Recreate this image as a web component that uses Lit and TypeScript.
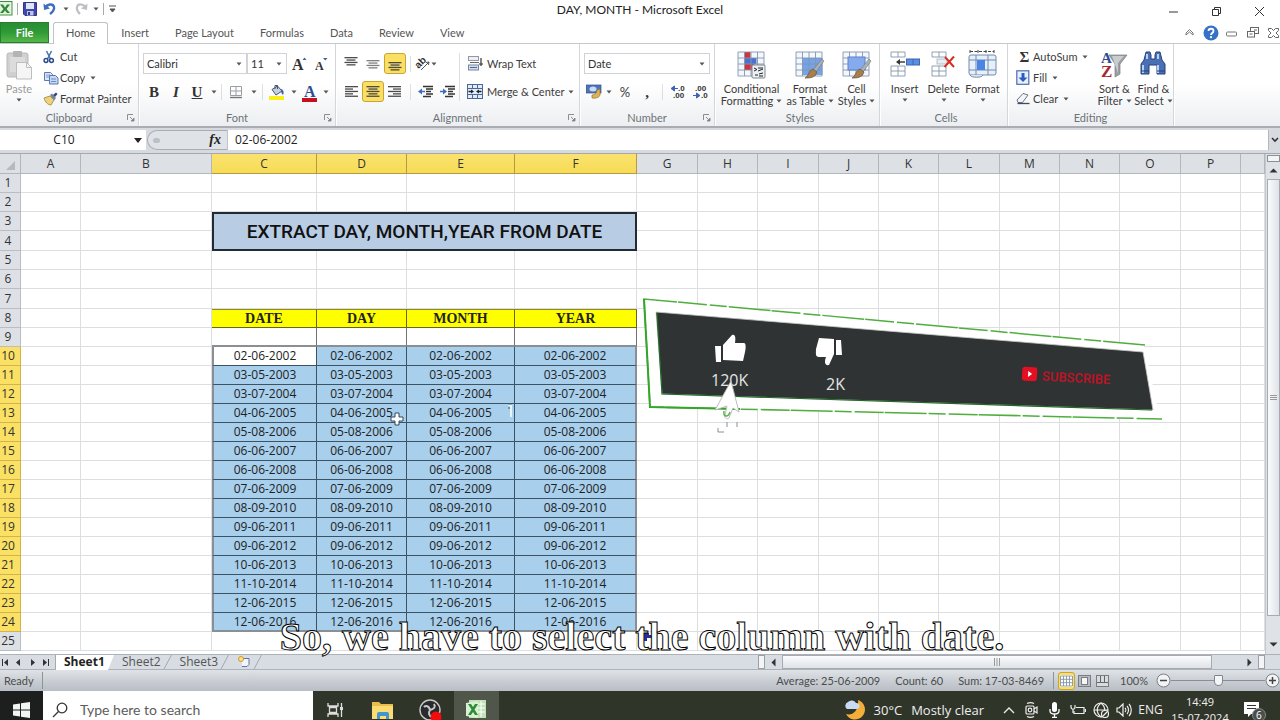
import { LitElement, html, css, svg, nothing } from "lit";
import { customElement, property } from "lit/decorators.js";
import { classMap } from "lit/directives/class-map.js";

const caret = html`<svg class="caret" width="6" height="4" viewBox="0 0 6 4"><path d="M0.5 0.5h5L3 3.5z" fill="#555" /></svg>`;
const launcher = html`<svg width="8" height="8" viewBox="0 0 8 8" fill="none" stroke="#8b8f94"><path d="M.5 6V.5H6M3 3l3 3" /><path d="M7 4v3H4z" fill="#777" /></svg>`;

const lines = (ws: number[], align: "l" | "c" | "r", off = 0) =>
  svg`${ws.map((w, i) => {
    const x = align === "l" ? 1 : align === "r" ? 13 - w : 7 - w / 2;
    return svg`<rect x=${x} y=${off + i * 2.4} width=${w} height="1.3" fill="#4b4b4b"/>`;
  })}`;

const gridLines = (w: number, h: number, c: number, r: number, x0 = 0, y0 = 0) => {
  let d = "";
  for (let i = 0; i <= c; i++) d += `M${x0 + (i * w) / c} ${y0}v${h}`;
  for (let j = 0; j <= r; j++) d += `M${x0} ${y0 + (j * h) / r}h${w}`;
  return svg`<path d=${d} fill="none" stroke="#8395ab" stroke-width=".9"/>`;
};

const brush = svg`<path d="M27 9l2 2-8 11-3-2z" fill="#aab0b5" stroke="#69737c" stroke-width=".6"/><path d="M18 19l4 3c-2 6-7 6-12 6 4-2 3-7 8-9z" fill="#a87e4b" stroke="#5d5342" stroke-width=".7"/>`;

const icons = {
  excel: html`<svg width="13" height="15" viewBox="0 0 13 15"><rect x="-3" y=".5" width="15" height="13.500" fill="#e4f3df" stroke="#3f9141"/><path d="M0 3.500h3l2 3 2-3h3L6.500 8l3.500 4H7L5 9.500 3 12H0l3.500-4z" fill="#2c8a35"/></svg>`,
  save: html`<svg width="14" height="14" viewBox="0 0 14 14"><path d="M.5.5h13v13H2L.5 12z" fill="#4348a8" stroke="#30368a"/><rect x="3" y="1" width="8" height="6" fill="#dfe6f5"/><rect x="4" y="9" width="6.500" height="4.500" fill="#b9c6ea"/><rect x="5" y="10" width="2" height="3" fill="#30368a"/></svg>`,
  undo: html`<svg width="14" height="14" viewBox="0 0 14 14" fill="none"><path d="M2 6c2-4 8-5 9-1 .7 3-1.500 5-4 7" stroke="#3f6fbd" stroke-width="2.400"/><path d="M.5 1.500L1 8l6-1.500z" fill="#3f6fbd"/></svg>`,
  redo: html`<svg width="14" height="14" viewBox="0 0 14 14" fill="none"><path d="M12 6c-2-4-8-5-9-1-.7 3 1 5 3 7" stroke="#bcbfc3" stroke-width="2.200"/><path d="M13.500 1.500L13 8 7 6.500z" fill="#bcbfc3"/></svg>`,
  paste: html`<svg width="26" height="30" viewBox="0 0 26 30"><rect x="1" y="3" width="21" height="24" rx="2" fill="#d0d0d0" stroke="#b9b9b9"/><rect x="7" y="1" width="9" height="6" rx="1" fill="#b4b4b4"/><rect x="4" y="7" width="15" height="15" fill="#dcdcdc"/><path d="M10.500 12.500h10l5 5V29h-15z" fill="#f5f5f5" stroke="#bdbdbd"/><path d="M20.500 12.500v5h5" fill="none" stroke="#bdbdbd"/></svg>`,
  cut: html`<svg width="12" height="14" viewBox="0 0 12 14" fill="none"><path d="M3.500 1l4 8M8.500 1l-4 8" stroke="#4a6fae" stroke-width="1.500"/><circle cx="3" cy="10.500" r="1.900" stroke="#2e4f8f" stroke-width="1.500"/><circle cx="8.500" cy="10.500" r="1.900" stroke="#2e4f8f" stroke-width="1.500"/></svg>`,
  copy: html`<svg width="16" height="14" viewBox="0 0 16 14" stroke="#5b79ad"><path d="M1.500 1.500h6l2 2v6h-8z" fill="#dce8fa"/><path d="M3 4h4M3 6h4" stroke="#7d99c9"/><path d="M6.500 4.500h6l2.500 2.500v6H6.500z" fill="#c4d8f7"/><path d="M8 8h5M8 10.500h5" stroke="#6f8dc4"/></svg>`,
  painter: html`<svg width="16" height="14" viewBox="0 0 16 14"><path d="M1 6l6-2 4 4-3 5c-3 0-6-3-7-7z" fill="#edd37a" stroke="#9a813b" stroke-width=".8"/><path d="M7 3l2-1.500L13 6l-2 2.500z" fill="#7783a5"/><path d="M10 3l3-2.500L14.500 2 12 5z" fill="#3a447e"/></svg>`,
  grow: html`<svg width="15" height="18" viewBox="0 -1 15 18"><text x="0" y="14" class="g16">A</text><path d="M10.500 4l2-2.500 2 2.500z" fill="#4a5f97"/></svg>`,
  shrink: html`<svg width="13" height="18" viewBox="0 -1 13 18"><text x="0" y="14" class="g12">A</text><path d="M8 2h4.500L10.300 4.500z" fill="#4a5f97"/></svg>`,
  borders: html`<svg width="14" height="14" viewBox="0 0 14 14" fill="none" stroke="#9a9ea3"><path d="M1.500 1.500h11v9h-11zM7 1.500v9M1.500 6h11"/><path d="M1 12.500h12" stroke="#777" stroke-width="1.400"/></svg>`,
  fill: html`<svg width="16" height="16" viewBox="0 0 16 16"><path d="M3 5.500L8.500 2 13 7 7 11z" fill="#c3cfe3" stroke="#46536e"/><path d="M6 5V1.500h2.500V5" fill="none" stroke="#46536e"/><path d="M12 5c3 1 3 4 2 6-1-1-2-2-2-6z" fill="#3a63b0"/><rect x="0" y="12" width="15" height="4" fill="#fbee1d"/></svg>`,
  fontColor: html`<svg width="16" height="20" viewBox="0 -4 16 20"><text x="2" y="11" class="g16 navy">A</text><rect x="0" y="12" width="15" height="4" fill="#c8101c"/></svg>`,
  aTop: html`<svg width="14" height="14" viewBox="0 0 14 14">${lines([13, 9, 13, 9], "c", 0)}</svg>`,
  aMid: html`<svg width="14" height="14" viewBox="0 0 14 14"><g opacity=".7">${lines([13, 9, 13, 9], "c", 3)}</g></svg>`,
  aBot: html`<svg width="14" height="14" viewBox="0 0 14 14">${lines([13, 9, 13, 9], "c", 5)}</svg>`,
  left: html`<svg width="14" height="13" viewBox="0 0 14 13">${lines([13, 8, 13, 8, 13], "l", 1)}</svg>`,
  center: html`<svg width="14" height="13" viewBox="0 0 14 13">${lines([13, 9, 13, 9, 13], "c", 1)}</svg>`,
  right: html`<svg width="14" height="13" viewBox="0 0 14 13">${lines([13, 8, 13, 8, 13], "r", 1)}</svg>`,
  orient: html`<svg width="16" height="18" viewBox="-1 -2 16 18"><g transform="rotate(-45 6 7)"><text x="0" y="8" class="g10">ab</text></g><path d="M5 13l8-8M13 5l-3 .5M13 5l-.5 3" stroke="#555" fill="none"/></svg>`,
  outdent: html`<svg width="15" height="13" viewBox="0 0 15 13"><path d="M5 1.500h10M8 4h7M8 6.500h5M8 9h7M5 11.500h8" stroke="#333" stroke-width="1.400"/><path d="M4 3.500v6L0 6.500z" fill="#3d6cc0"/><path d="M3 6.500h4" stroke="#3d6cc0" stroke-width="1.500"/></svg>`,
  indent: html`<svg width="15" height="13" viewBox="0 0 15 13"><path d="M5 1.500h10M8 4h7M8 6.500h5M8 9h7M5 11.500h8" stroke="#333" stroke-width="1.400"/><path d="M3 3.500v6l4-3z" fill="#3d6cc0"/><path d="M0 6.500h4" stroke="#3d6cc0" stroke-width="1.500"/></svg>`,
  wrap: html`<svg width="16" height="15" viewBox="0 0 16 15"><rect x="1.500" y=".5" width="10" height="4" fill="#eceff3" stroke="#9098a3"/><rect x="1.500" y="9" width="10" height="5" fill="#cfe0f6" stroke="#7486a3"/><path d="M3 6.500h9M3 11.500h7" stroke="#666"/><path d="M14 2v6M16 8h-4M14 10V6" stroke="#333" stroke-width="1.200"/></svg>`,
  merge: html`<svg width="16" height="15" viewBox="0 0 16 15"><rect x=".5" y=".5" width="15" height="14" fill="#e2ebf8" stroke="#4c6696"/><path d="M.5 4.500h15M.5 10.500h15M5.500.5v4M10.500.5v4M5.500 10.500v4M10.500 10.500v4" stroke="#4c6696"/><path d="M1.500 7.500h4M14.500 7.500h-4" stroke="#222" stroke-width="1.400"/><path d="M4 5.500l3 2-3 2zM12 5.500l-3 2 3 2z" fill="#222"/></svg>`,
  money: html`<svg width="16" height="15" viewBox="0 0 16 15"><rect x="0" y="1" width="15" height="8" fill="#4f75b9" stroke="#2f4e8d" stroke-width=".7"/><ellipse cx="7" cy="5" rx="3.500" ry="2.500" fill="#c8dcf8"/><path d="M14 5v6c-1 3-5 3.500-8 3v-3c3 0 5-2 5-5z" fill="#dfb554" stroke="#94722a" stroke-width=".7"/></svg>`,
  incDec: html`<svg width="16" height="15" viewBox="0 0 16 15"><path d="M0 4.500l3.500-2.500v5zM3 4.500h4" fill="#3b64b4" stroke="#3b64b4"/><text x="7" y="7" class="g8">.0</text><text x="2" y="14" class="g8">.00</text></svg>`,
  decDec: html`<svg width="16" height="15" viewBox="0 0 16 15"><text x="2" y="7" class="g8">.00</text><path d="M7 11.500L3.500 9v5zM0 11.500h4" fill="#3b64b4" stroke="#3b64b4"/><text x="8" y="14" class="g8">.0</text></svg>`,
  cond: html`<svg width="29" height="29" viewBox="0 0 29 29"><rect x="1" y="2" width="26" height="23" fill="#f4f8fe"/><rect x="7.500" y="2" width="6" height="6" fill="#d4323a"/><rect x="7.500" y="8" width="12" height="6" fill="#4a73cf"/><rect x="7.500" y="14" width="10" height="6" fill="#d4323a"/>${gridLines(26, 24, 4, 4, 1, 2)}<rect x="15" y="15" width="13" height="13" rx="1" fill="#eceff3" stroke="#7d8793"/><path d="M17 18l3 1.500-3 1.500M21 18h5M21 21l5-2M18 25h3M22 24l4-1M22 26h4" stroke="#222" fill="none"/></svg>`,
  table: html`<svg width="30" height="29" viewBox="0 0 30 29"><rect x="1" y="2" width="26" height="23" fill="#f4f8fe"/><rect x="7.500" y="8" width="20" height="17" fill="#74a3ea"/>${gridLines(26, 24, 4, 4, 1, 2)}${brush}</svg>`,
  cell: html`<svg width="30" height="29" viewBox="0 0 30 29"><rect x="1" y="2" width="26" height="23" fill="#f4f8fe"/>${gridLines(26, 24, 4, 4, 1, 2)}<rect x="6" y="7" width="17" height="13" fill="#85abee" stroke="#5d80c3"/>${brush}</svg>`,
  insert: html`<svg width="30" height="28" viewBox="0 0 30 28"><rect x="1" y="2" width="14" height="5" fill="#fff"/>${gridLines(14, 5, 2, 1, 1, 2)}${gridLines(14, 10, 2, 2, 1, 16)}<rect x="16.500" y="9" width="13" height="6" fill="#5a8de4" stroke="#3d66b0"/><path d="M23 9v6" stroke="#3d66b0"/><path d="M15 12H8" stroke="#333" stroke-width="1.400"/><path d="M10 9l-4 3 4 3z" fill="#333"/></svg>`,
  del: html`<svg width="26" height="28" viewBox="0 0 26 28">${gridLines(14, 5, 2, 1, 1, 2)}${gridLines(14, 10, 2, 2, 1, 16)}<rect x="6" y="9" width="10" height="5" fill="#e9eef6" stroke="#9aa7b8" stroke-width=".7"/><path d="M14 7l9 10M23 6.500L13.500 17" stroke="#d63025" stroke-width="2"/></svg>`,
  format: html`<svg width="30" height="29" viewBox="0 0 30 29"><path d="M2 1.500h24M2 0v3M10 0v3M18 0v3M26 0v3" stroke="#444" stroke-dasharray="3 1.500"/><rect x="1" y="5" width="27" height="20" rx="2" fill="#e5f0fc" stroke="#748ba8"/><path d="M8 5v20M20 5v20M1 10h27M1 20h27" stroke="#748ba8"/><rect x="9" y="10" width="8" height="10" fill="#4c84e3"/><path d="M2 25c1 3 12 3 13 0" fill="#dde5ee" stroke="#748ba8"/></svg>`,
  down: html`<svg width="14" height="15" viewBox="0 0 14 15"><rect x=".8" y=".8" width="12" height="13.500" fill="#e8f0fb" stroke="#4a6db3" stroke-width="1.200"/><path d="M7 3v6" stroke="#2d5cc0" stroke-width="3"/><path d="M2.500 7.500h9L7 12z" fill="#2d5cc0"/></svg>`,
  eraser: html`<svg width="14" height="13" viewBox="0 0 14 13"><path d="M1 8l6-6.500 5 1.500-5.500 7.500L2 10.500z" fill="#f3f5f8" stroke="#6b7486"/><path d="M1.500 11.500h12" stroke="#404a5c" stroke-width="1.300"/></svg>`,
  sort: html`<svg width="28" height="31" viewBox="0 0 28 31"><path d="M9 5h18l-7 9v10l-5 3V14z" fill="#9c9fa3" stroke="#7b7e83" stroke-width=".7"/><path d="M12 6h12l-6 7v10z" fill="#c9cbce"/><text x="1" y="13" class="g15 navy">A</text><text x="1" y="27" class="g17 red">Z</text></svg>`,
  find: html`<svg width="28" height="27" viewBox="0 0 28 27"><path d="M7 2h4l1 3v4h4V5l1-3h4l2 8 3 4v10h-8v-9h-8v9H2V14l3-4z" fill="#4a6fb5" stroke="#25407a"/><path d="M4 15v8M19 15v8M8 4v5M19 4v5" stroke="#b9d0f5" stroke-width="2"/><path d="M2 21h8M18 21h8" stroke="#25407a"/></svg>`,
};

const dates = [
  "02-06-2002", "03-05-2003", "03-07-2004", "04-06-2005", "05-08-2006",
  "06-06-2007", "06-06-2008", "07-06-2009", "08-09-2010", "09-06-2011",
  "09-06-2012", "10-06-2013", "11-10-2014", "12-06-2015", "12-06-2016",
];
const heads = ["DATE", "DAY", "MONTH", "YEAR"];
const columns = [..."ABCDEFGHIJKLMNOP", ""];
const colWidths = [21, 60, 131, 105, 90, 108, 122, 61, 60, 61, 60, 60, 61, 60, 60, 61, 60];
const tallRows = new Set([4, 7]);

@customElement("ribbon-group")
class RibbonGroup extends LitElement {
  @property() label = "";
  @property({ type: Boolean }) dialog = false;
  static styles = css`
    :host { display: flex; flex-direction: column; box-sizing: border-box; border-right: 1px solid #d3d6da; box-shadow: 1px 0 #fff; }
    .body { flex: 1; display: flex; min-height: 0; }
    .foot { display: grid; grid-template-columns: 14px 1fr 14px; align-items: center; height: 17px; color: #6d7278; text-align: center; }
    button { border: 0; background: none; padding: 0; height: 10px; line-height: 0; }
    .name { grid-column: 2; }
  `;
  render() {
    return html`<div class="body"><slot></slot></div>
      <div class="foot"><span class="name">${this.label}</span>${this.dialog ? html`<button aria-label="${this.label} options">${launcher}</button>` : nothing}</div>`;
  }
}

@customElement("app-root")
class AppRoot extends LitElement {
  static styles = css`
    :host { display: flex; flex-direction: column; height: 100vh; overflow: hidden; position: relative; font: 11px/14px Lato, "Open Sans", sans-serif; color: #3c3c3c; background: #fff; }
    * { box-sizing: border-box; }
    button, select, input { font: inherit; color: inherit; border: 0; background: none; padding: 0; margin: 0; border-radius: 0; outline: 0; }
    select { appearance: none; }
    a { color: inherit; text-decoration: none; }
    svg { display: block; flex: none; }
    .g8 { font: bold 8px "Liberation Sans", sans-serif; fill: #333; }
    .g10 { font: bold 10px "Liberation Sans", sans-serif; fill: #333; }
    .g12 { font: bold 12px "Liberation Serif", serif; fill: #333; }
    .g15 { font: bold 15px "Liberation Serif", serif; }
    .g16 { font: bold 16px "Liberation Serif", serif; fill: #333; }
    .g17 { font: bold 17px "Liberation Serif", serif; }
    .navy { fill: #2f4c8f; }
    .red { fill: #a52b35; }

    .title { display: grid; grid-template-columns: 1fr auto 1fr; height: 22px; align-items: start; }
    .quick { display: flex; align-items: center; height: 17px; }
    .quick button { height: 16px; display: grid; place-items: center; }
    .w6 { width: 6px; } .w8 { width: 8px; } .w14 { width: 14px; } .w16 { width: 16px; } .w20 { width: 20px; } .w22 { width: 22px; } .w24 { width: 24px; } .w26 { width: 26px; } .w28 { width: 28px; } .w30 { width: 30px; }
    .ml4 { margin-left: 4px; }
    .bar { width: 1px; height: 12px; background: #a7a9ab; margin: 0 5px 0 4px; }
    .caption { font-size: 12px; line-height: 20px; color: #222; }
    .win { display: flex; justify-content: flex-end; gap: 22px; padding-right: 10px; height: 22px; }
    .win button { width: 21px; display: grid; place-items: center; }

    .tabs { display: flex; height: 22px; border-bottom: 1px solid #c4c8cc; flex: none; }
    .tabs a { padding: 0 13px; line-height: 22px; height: 22px; color: #555; }
    .tabs .file { width: 49px; padding: 0; text-align: center; color: #fff; font-weight: 700; margin-right: 4px; background: linear-gradient(#2a8c34, #2f9a37 50%, #55b745); border: 1px solid #258030; height: 21px; line-height: 19px; }
    .tabs .on { background: #fff; border: 1px solid #bfc3c8; border-bottom: 0; border-radius: 3px 3px 0 0; padding: 0 12px; line-height: 20px; }
    .help { margin-left: auto; margin-right: -4px; display: flex; align-items: center; }
    .help button { width: 21px; height: 20px; display: grid; place-items: center; }

    .ribbon { display: flex; height: 84px; flex: none; background: linear-gradient(#fff 50%, #eceef1); border-bottom: 2px solid #a9adb2; }
    .clip { width: 139px; } .font { width: 197px; } .align { width: 244px; } .num { width: 135px; } .styles { width: 165px; padding-left: 6px; } .cells { width: 128px; padding-left: 5px; } .edit { width: 166px; }
    .big { display: flex; flex-direction: column; align-items: center; padding-top: 6px; line-height: 12px; }
    .big .ic { height: 33px; }
    .big .two { display: flex; align-items: center; gap: 3px; }
    .big .caret { margin-top: 3px; }
    .big .two .caret { margin-top: 0; }
    .clip .big { width: 38px; }
    .styles .big:nth-child(1) { width: 61px; } .styles .big:nth-child(2) { width: 56px; } .styles .big:nth-child(3) { width: 37px; }
    .cells .big { width: 39px; }
    .edit .big { width: 40px; }
    .muted { color: #9b9b9b; }
    .list { display: flex; flex-direction: column; padding-top: 2px; margin-left: 5px; }
    .edit .list { width: 81px; margin-left: 8px; }
    .list button { display: grid; grid-template-columns: 17px auto auto; align-items: center; justify-content: start; height: 21px; }
    .list .caret { margin-left: 5px; }
    .rows { display: flex; flex-direction: column; padding-top: 9px; gap: 7px; padding-left: 4px; }
    .row { display: flex; align-items: center; height: 21px; }
    .row button { display: flex; align-items: center; justify-content: center; height: 21px; }
    .combo { display: grid; align-items: center; border: 1px solid #d0d3d7; height: 21px; background: #fff; }
    .combo > * { grid-area: 1 / 1; }
    .combo select { width: 100%; padding-left: 3px; height: 19px; color: #333; }
    .combo .caret { justify-self: end; margin-right: 4px; }
    .w104 { width: 104px; } .w40 { width: 40px; } .w126 { width: 126px; }
    .vr { width: 1px; height: 16px; background: #dcdee1; }
    .tall { height: 48px; margin: 9px 3px 0 4px; }
    .gapped { margin: 0 8px 0 4px; }
    .active { background: #fbdf63; border: 1px solid #c9a437; border-radius: 3px; }
    .serif { font: 700 15px/20px "Liberation Serif", serif; color: #333; }
    .it { font-style: italic; } .un { text-decoration: underline; }
    .pct { font-size: 13px; }
    .wide { gap: 4px; }

    .formula { display: flex; height: 26px; flex: none; background: #d7dbe0; padding: 2px 0 3px; border-bottom: 1px solid #a5a9ae; font: 12px/16px "Open Sans", sans-serif; color: #222; }
    .namebox { width: 146px; display: flex; align-items: center; background: #fff; padding-right: 4px; }
    .namebox input { flex: 1; min-width: 0; text-align: center; padding-right: 6px; }
    .fx { width: 81px; display: flex; align-items: center; justify-content: flex-end; padding-right: 6px; border: 1px solid #a9aeb5; border-right-color: #c0c4c8; border-radius: 10px 0 0 10px; background: #dfe3e8; font: italic 700 14px/18px "Liberation Serif", serif; margin-left: 1px; }
    .fx i { width: 7px; height: 5px; border-radius: 3px; background: #bcc0c5; margin-right: auto; margin-left: 5px; }
    .formula .entry { flex: 1; background: #fff; padding-left: 7px; }
    .expand { width: 12px; display: grid; place-items: center; background: #d7dbe0; border-left: 1px solid #b3b7bc; }

    .sheet { flex: 1; min-height: 0; display: flex; position: relative; overflow: hidden; }
    .cellsbox { flex: 1; min-width: 0; overflow: hidden; }
    table { border-collapse: separate; border-spacing: 0; table-layout: fixed; width: 100%; font: 12px/14px "Open Sans", sans-serif; color: #222; }
    th, td { padding: 0; height: 19px; border-right: 1px solid #dcdee1; border-bottom: 1px solid #dcdee1; text-align: center; font-weight: 400; white-space: nowrap; overflow: hidden; }
    thead th { background: #dde1e6; border-color: #b2b7bd; height: 20px; color: #333; }
    tbody th { background: #dde1e6; border-color: #b9bec4; padding-right: 4px; color: #333; }
    .tr20 td, .tr20 th { height: 20px; }
    thead .hot { background: linear-gradient(#fbe26f, #f6dc55); border-color: #b39a43; }
    tbody .hot { background: #fbe163; border-color: #d2b34d; }
    td.banner { background: #b8cce4; border: 2px solid #222a33; font: 500 19px/24px Roboto, sans-serif; color: #111; }
    td.head { background: #ff0; border: 1px solid #66661a; border-left: 0; border-top-color: #8b8b20; font: 700 14px/16px "Liberation Serif", serif; }
    td.sub { border-right-color: #6f7378; border-bottom: 2px solid #8b8f94; }
    td.sel { background: #a8cfec; border-color: #3d5263; }
    td.first { background: #fff; }
    td.le { border-left: 2px solid #8a8f95; }
    td.re { border-right: 2px solid #8a8f95; }
    td.be { border-bottom: 2px solid #8a8f95; }

    .vscroll { width: 15px; display: flex; flex-direction: column; align-items: center; background: #dfe2e6; border-left: 1px solid #c5c9cd; padding-bottom: 1px; }
    .vsplit { width: 13px; height: 7px; border: 1px solid #8c9095; background: #f3f4f5; margin-top: 1px; }
    .vscroll button { height: 17px; width: 13px; display: grid; place-items: center; }
    .vthumb { flex: 1; width: 13px; border: 1px solid #a7abb0; background: linear-gradient(90deg, #fafbfc, #dfe3e8); display: grid; place-items: center; margin-bottom: 20px; }

    .over { position: absolute; pointer-events: none; }
    .promo { left: 640px; top: 139px; }
    .count { font: 500 16px "Open Sans", sans-serif; fill: #e2e4e4; }
    .subs { font: 500 13px Roboto, sans-serif; fill: #c01226; }
    .cross { left: 389px; top: 257px; }
    .tag { left: 640px; top: 476px; }
    .mark { left: 507px; top: 249px; }
    .cc { left: 4px; right: 0; bottom: 61px; text-align: center; font: 700 40px/44px "Liberation Serif", serif; color: #fff; -webkit-text-stroke: 1px #000; }

    .tabbar { display: flex; height: 16px; flex: none; background: #d7dde3; border-top: 1px solid #adb2b8; border-bottom: 1px solid #adb2b8; font: 12px/14px "Open Sans", sans-serif; color: #555; align-items: stretch; }
    .nav { display: flex; width: 56px; align-items: center; justify-content: space-between; padding: 0 5px 0 1px; border-right: 1px solid #a5a9ae; }
    .nav button { width: 9px; height: 13px; display: grid; place-items: center; }
    .tabbar a { padding: 0 2px 0 8px; height: 15px; }
    .tabbar a.cur { background: #fff; font-weight: 700; color: #222; clip-path: polygon(0 0, 100% 0, calc(100% - 6px) 100%, 0 100%); width: 58px; }
    .hs { margin-left: auto; display: flex; width: 522px; align-items: center; }
    .split { width: 7px; height: 14px; border: 1px solid #9ca0a5; background: #f3f4f5; }
    .hs button { width: 17px; display: grid; place-items: center; height: 14px; }
    .hthumb { flex: 1; height: 14px; border: 1px solid #a7abb0; background: linear-gradient(#fafbfc, #dfe3e8); display: grid; place-items: center; }
    .hs .rbtn { margin-left: 29px; }
    .pad15 { margin-right: 15px; }

    .status { display: flex; height: 21px; flex: none; align-items: center; background: linear-gradient(#dfe3e7, #c6cbd1 60%, #b8bec4); color: #4c4c4c; padding-left: 4px; }
    .status .vr { background: #8f9499; height: 17px; }
    .ready { width: 38px; }
    .nums { margin-left: auto; display: flex; gap: 15px; padding-right: 9px; }
    .views { display: flex; align-items: center; gap: 1px; margin: 0 9px 0 4px; }
    .views button { width: 17px; height: 18px; display: grid; place-items: center; }
    .zoom { display: flex; align-items: center; margin-left: 8px; }
    .zoom input { appearance: none; width: 94px; height: 16px; background: linear-gradient(#8a8f95, #8a8f95) center / 100% 1px no-repeat; }
    .zoom input::-webkit-slider-thumb { appearance: none; width: 9px; height: 11px; border: 1px solid #7f858b; background: #f4f5f6; border-radius: 1px 1px 4px 4px; }

    .task { height: 29px; flex: none; background: #30352a; overflow: hidden; color: #eee; font: 12px/16px "Open Sans", sans-serif; }
    .inner { display: flex; height: 37px; align-items: center; }
    .inner button { display: grid; place-items: center; height: 37px; }
    .start { width: 43px; background: #1c1f1d; }
    .search { width: 270px; height: 37px; background: #fff; color: #555; display: flex; align-items: center; gap: 12px; padding-left: 9px; font: 14px/18px Lato, sans-serif; margin-right: -1px; }
    .search input { flex: 1; min-width: 0; }
    .search input::placeholder { color: #5c5c5c; opacity: 1; }
    .app { width: 48px; }
    .app.view { width: 46px; }
    .app.live { background: #50564a; width: 45px; }
    .right { margin-left: auto; display: flex; align-items: center; height: 37px; }
    .weather { display: flex; align-items: center; gap: 8px; margin-right: 13px; }
    .wx { font-size: 13px; display: flex; gap: 9px; }
    .tray { width: 23px; height: 37px; }
    .lang { width: 31px; text-align: center; }
    .clock { width: 60px; text-align: center; font-size: 11px; margin-left: 4px; white-space: nowrap; }
    .note { width: 50px; }
    .six { font: 10px "Open Sans", sans-serif; fill: #fff; }
  `;

  big(icon: unknown, a: string, b?: string) {
    return html`<button class="big"><span class="ic">${icon}</span><span>${a}</span>${b ? html`<span class="two">${b}${caret}</span>` : caret}</button>`;
  }

  ribbon() {
    return html`<section class="ribbon" aria-label="Home">
      <ribbon-group class="clip" label="Clipboard" dialog>
        <button class="big muted"><span class="ic">${icons.paste}</span><span>Paste</span>${caret}</button>
        <div class="list">
          <button>${icons.cut}<span>Cut</span></button>
          <button>${icons.copy}<span>Copy</span>${caret}</button>
          <button>${icons.painter}<span>Format Painter</span></button>
        </div>
      </ribbon-group>
      <ribbon-group class="font" label="Font" dialog>
        <div class="rows">
          <div class="row">
            <label class="combo w104"><select aria-label="Font"><option>Calibri</option></select>${caret}</label>
            <label class="combo w40"><select aria-label="Font size"><option>11</option></select>${caret}</label>
            <button aria-label="Grow font" class="w24">${icons.grow}</button>
            <button aria-label="Shrink font" class="w20">${icons.shrink}</button>
          </div>
          <div class="row">
            <button class="serif w22">B</button><button class="serif it w22">I</button><button class="serif un w20">U</button>
            <button class="w14" aria-label="Underline style">${caret}</button><span class="vr"></span>
            <button class="w28" aria-label="Borders">${icons.borders}</button><button class="w8" aria-label="Border style">${caret}</button><span class="vr ml4"></span>
            <button class="w28" aria-label="Fill colour">${icons.fill}</button><button class="w6" aria-label="Pick fill">${caret}</button>
            <button class="w26" aria-label="Font colour">${icons.fontColor}</button><button class="w6" aria-label="Pick colour">${caret}</button>
          </div>
        </div>
      </ribbon-group>
      <ribbon-group class="align" label="Alignment" dialog>
        <div class="rows">
          <div class="row"><button class="w22" aria-label="Top">${icons.aTop}</button><button class="w22" aria-label="Middle">${icons.aMid}</button><button class="w22 active" aria-label="Bottom">${icons.aBot}</button></div>
          <div class="row"><button class="w22" aria-label="Left">${icons.left}</button><button class="w22 active" aria-label="Centre">${icons.center}</button><button class="w22" aria-label="Right">${icons.right}</button></div>
        </div>
        <div class="rows">
          <div class="row"><span class="vr"></span><button class="w30" aria-label="Orientation">${icons.orient}${caret}</button></div>
          <div class="row"><span class="vr"></span><button class="w28" aria-label="Outdent">${icons.outdent}</button><button class="w16" aria-label="Indent">${icons.indent}</button></div>
        </div>
        <span class="vr tall"></span>
        <div class="rows">
          <div class="row"><button class="wide">${icons.wrap}Wrap Text</button></div>
          <div class="row"><button class="wide">${icons.merge}Merge &amp; Center ${caret}</button></div>
        </div>
      </ribbon-group>
      <ribbon-group class="num" label="Number" dialog>
        <div class="rows">
          <div class="row"><label class="combo w126"><select aria-label="Number format"><option>Date</option></select>${caret}</label></div>
          <div class="row">
            <button class="w30 wide" aria-label="Currency">${icons.money}${caret}</button>
            <button class="w22 pct">%</button><button class="serif w22">,</button><span class="vr gapped"></span>
            <button class="w16" aria-label="Increase decimal">${icons.incDec}</button><button class="w28" aria-label="Decrease decimal">${icons.decDec}</button>
          </div>
        </div>
      </ribbon-group>
      <ribbon-group class="styles" label="Styles">
        ${this.big(icons.cond, "Conditional", "Formatting")}${this.big(icons.table, "Format", "as Table")}${this.big(icons.cell, "Cell", "Styles")}
      </ribbon-group>
      <ribbon-group class="cells" label="Cells">
        ${this.big(icons.insert, "Insert")}${this.big(icons.del, "Delete")}${this.big(icons.format, "Format")}
      </ribbon-group>
      <ribbon-group class="edit" label="Editing">
        <div class="list">
          <button><span class="serif">Σ</span><span>AutoSum</span>${caret}</button>
          <button>${icons.down}<span>Fill</span>${caret}</button>
          <button>${icons.eraser}<span>Clear</span>${caret}</button>
        </div>
        ${this.big(icons.sort, "Sort &", "Filter")}${this.big(icons.find, "Find &", "Select")}
      </ribbon-group>
    </section>`;
  }

  row(n: number) {
    const hot = n >= 10 && n <= 24;
    const cells: unknown[] = [];
    for (let c = 0; c < 17; c++) {
      const k = c - 2;
      const inside = k >= 0 && k < 4;
      if (inside && n === 3) {
        if (k === 0) cells.push(html`<td class="banner" colspan="4" rowspan="2">EXTRACT DAY, MONTH,YEAR FROM DATE</td>`);
      } else if (inside && n === 4) {
        continue;
      } else if (inside && n === 8) cells.push(html`<td class="head">${heads[k]}</td>`);
      else if (inside && n === 9) cells.push(html`<td class="sub"></td>`);
      else if (inside && hot)
        cells.push(html`<td class=${classMap({ sel: true, first: n === 10 && k === 0, le: k === 0, re: k === 3, be: n === 24 })}>${dates[n - 10]}</td>`);
      else cells.push(html`<td></td>`);
    }
    return html`<tr class=${classMap({ tr20: tallRows.has(n) })}><th scope="row" class=${classMap({ hot })}>${n}</th>${cells}</tr>`;
  }

  promo() {
    return html`<svg class="over promo" width="524" height="155" viewBox="0 0 524 155">
      <path d="M4 6L504 52l16 74L10 114z" fill="#fff"/>
      <path d="M505 52L4 6l6 108 512 12" fill="none" stroke="#4fae3e" stroke-width="1.500" stroke-dasharray="42 2 17 3 29 1"/>
      <path d="M4 6L10 114l90 2" fill="none" stroke="#36a52c" stroke-width="2"/>
      <path d="M16 19L503 59l10 58L22 101z" fill="#303334" stroke="#c4c8c4" stroke-width=".8"/>
      <path d="M17 20l5 81 490 16" fill="none" stroke="#1f6a24" stroke-width="1.200"/>
      <g fill="#fff"><path d="M75 53h6v16h-5zM83 67V52l9-10c3-1 4 2 3 8h9c2 0 2 5 1 9l-2 9z"/>
      <path d="M201 47h-5v15h6zM194 46v15l-5 11c-4 1-5-3-3-8h-7c-4 0-3-4-3-8l3-11z"/></g>
      <text x="71" y="93" class="count">120K</text><text x="186" y="97" class="count">2K</text>
      <g transform="rotate(3 390 83)"><rect x="382" y="74" width="15" height="14" rx="3" fill="#e30f22"/><path d="M388 78l4 3-4 3z" fill="#fff"/><text x="402" y="87" class="subs">SUBSCRIBE</text></g>
      <path d="M91 88l8 31-6-4-4 10c-2 2-5 0-4-3l2-9-12 4z" fill="#fff" stroke="#b5b5b5" stroke-width=".9"/>
      <path d="M84 118c-1 6 4 7 6 1" fill="none" stroke="#57b848" stroke-width="1.500"/>
      <path d="M87 134v-5M97 134v-5M78 135v4h6" fill="none" stroke="#8e8e8e"/>
    </svg>`;
  }

  slash() {
    return html`<svg width="9" height="14" viewBox="0 0 9 14"><path d="M8.500 0L1 14" stroke="#a5a9ae" fill="none"/></svg>`;
  }

  render() {
    const tri = (d: string) => html`<svg width="9" height="9" viewBox="0 0 9 9"><path d=${d} fill="#333" /></svg>`;
    return html`
      <header class="title">
        <div class="quick">
          ${icons.excel}<span class="bar"></span><button class="w14" aria-label="Save">${icons.save}</button>
          <button class="w26" aria-label="Undo">${icons.undo}</button><button class="w6" aria-label="Undo list">${caret}</button>
          <button class="w16 ml4" aria-label="Redo">${icons.redo}</button><button class="w6 ml4" aria-label="Redo list">${caret}</button>
          <span class="bar"></span><button aria-label="Customise"><svg width="7" height="8" viewBox="0 0 7 8"><path d="M0 1h7M1 4h5L3.500 7z" stroke="#555" fill="#555"/></svg></button>
        </div>
        <span class="caption">DAY, MONTH - Microsoft Excel</span>
        <div class="win">
          <button aria-label="Minimise"><svg width="11" height="11" viewBox="0 0 11 11"><path d="M1 6h9" stroke="#333"/></svg></button>
          <button aria-label="Restore"><svg width="11" height="11" viewBox="0 0 11 11" fill="none" stroke="#333"><path d="M1.500 3.500h6v6h-6zM3.500 3.500v-2h6v6h-2"/></svg></button>
          <button aria-label="Close"><svg width="11" height="11" viewBox="0 0 11 11"><path d="M1 1l9 9M10 1l-9 9" stroke="#333"/></svg></button>
        </div>
      </header>
      <nav class="tabs">
        <a class="file" href="#">File</a><a class="on" href="#">Home</a>
        ${["Insert", "Page Layout", "Formulas", "Data", "Review", "View"].map((t) => html`<a href="#">${t}</a>`)}
        <div class="help">
          <button aria-label="Collapse"><svg width="9" height="9" viewBox="0 0 9 9" fill="none" stroke="#777"><path d="M1 5l3.500-3.500L8 5v2L4.500 4 1 7z"/></svg></button>
          <button aria-label="Help"><svg width="16" height="16" viewBox="0 0 16 16"><circle cx="8" cy="8" r="7.500" fill="#3572c6"/><path d="M5.500 6c0-3 5-3 5 0 0 2-2.500 2-2.500 4" fill="none" stroke="#fff" stroke-width="1.800"/><circle cx="8" cy="12.200" r="1.100" fill="#fff"/></svg></button>
          <button aria-label="Minimise workbook"><svg width="11" height="8" viewBox="0 0 11 8"><rect x=".5" y="3" width="10" height="4" rx="1" fill="none" stroke="#777"/></svg></button>
          <button aria-label="Restore workbook"><svg width="12" height="11" viewBox="0 0 12 11" fill="#fff" stroke="#666"><rect x="3.500" y=".5" width="8" height="6"/><rect x=".5" y="4.500" width="7" height="5.500"/><path d="M2.500 7h3M7 3h3"/></svg></button>
          <button aria-label="Close workbook"><svg width="11" height="10" viewBox="0 0 11 10" fill="none" stroke="#666"><path d="M.5.5h3l2 2 2-2h3v2L8 5l2.500 2.500v2h-3l-2-2-2 2h-3v-2L3 5 .5 2.500z"/></svg></button>
        </div>
      </nav>
      ${this.ribbon()}
      <div class="formula">
        <div class="namebox"><input aria-label="Name box" value="C10" /><svg width="8" height="5" viewBox="0 0 8 5"><path d="M0 0h8L4 5z" fill="#222"/></svg></div>
        <div class="fx"><i></i>fx</div>
        <input class="entry" aria-label="Formula" value="02-06-2002" />
        <button class="expand" aria-label="Expand"><svg width="8" height="6" viewBox="0 0 8 6"><path d="M1 1l3 3 3-3" fill="none" stroke="#333" stroke-width="1.600"/></svg></button>
      </div>
      <main class="sheet">
        <div class="cellsbox">
          <table>
            <colgroup>${colWidths.map((w) => html`<col style="width:${w}px" />`)}<col /></colgroup>
            <thead><tr><th scope="col"><svg width="20" height="18" viewBox="0 0 20 18"><path d="M15 6v9H6z" fill="#b5bac0"/></svg></th>
              ${columns.map((c, i) => html`<th scope="col" class=${classMap({ hot: i >= 2 && i <= 5 })}>${c}</th>`)}</tr></thead>
            <tbody>${Array.from({ length: 25 }, (_, i) => this.row(i + 1))}</tbody>
          </table>
        </div>
        <div class="vscroll"><span class="vsplit"></span><button aria-label="Scroll up">${tri("M0.5 6.5h8l-4-4z")}</button>
          <div class="vthumb"><svg width="7" height="6" viewBox="0 0 7 6"><path d="M0 .5h7M0 2.500h7M0 4.500h7" stroke="#999"/></svg></div>
          <button aria-label="Scroll down">${tri("M0.5 2.5h8l-4 4z")}</button></div>
        ${this.promo()}
        <svg class="over cross" width="16" height="16" viewBox="0 0 16 16"><path d="M6 2h4v4h4v4h-4v4H6v-4H2V6h4z" fill="#fff" stroke="#34495c"/></svg>
        <svg class="over mark" width="8" height="16" viewBox="0 0 8 16"><path d="M1 2h3v12" fill="none" stroke="#e8f4fc" stroke-width="2"/><path d="M1 1h4M2 4v2" stroke="#35606c"/></svg>
        <svg class="over tag" width="16" height="22" viewBox="0 0 16 22"><path d="M3 3h6v2h4v3H7v3H3z" fill="#272e92"/><path d="M2 20h12" stroke="#f2ef8a" stroke-width="2"/></svg>
      </main>
      <div class="tabbar">
        <div class="nav">
          <button aria-label="First">${tri("M1 1h1v7H1zM7 1v7L3 4.5z")}</button><button aria-label="Previous">${tri("M6 1v7L2 4.5z")}</button>
          <button aria-label="Next">${tri("M3 1v7l4-3.5z")}</button><button aria-label="Last">${tri("M2 1v7l4-3.5zM7 1h1v7H7z")}</button>
        </div>
        <a class="cur" href="#">Sheet1</a>
        ${["Sheet2", "Sheet3"].map((t) => html`<a href="#">${t}</a>${this.slash()}`)}
        <a href="#" aria-label="New sheet"><svg width="14" height="13" viewBox="0 0 14 13"><path d="M5 3.500h7v6l-2 2H5" fill="#f2f5fb" stroke="#6273ab"/><circle cx="4" cy="4" r="2.500" fill="#ffe07a" stroke="#c99a32"/></svg></a>${this.slash()}
        <div class="hs"><span class="split"></span><button aria-label="Scroll left">${tri("M6.500 .5v8l-4-4z")}</button>
          <div class="hthumb"><svg width="7" height="8" viewBox="0 0 7 8"><path d="M.5 0v8M3 0v8M5.500 0v8" stroke="#999"/></svg></div>
          <button class="rbtn" aria-label="Scroll right">${tri("M2.500 .5v8l4-4z")}</button><span class="split pad15"></span></div>
      </div>
      <footer class="status">
        <span class="ready">Ready</span><span class="vr"></span>
        <div class="nums"><span>Average: 25-06-2009</span><span>Count: 60</span><span>Sum: 17-03-8469</span></div><span class="vr"></span>
        <div class="views">
          <button class="active" aria-label="Normal"><svg width="13" height="12" viewBox="0 0 13 12"><rect width="13" height="12" fill="#fff"/>${gridLines(12, 10, 4, 3, 0.5, 1)}</svg></button>
          <button aria-label="Page layout"><svg width="13" height="12" viewBox="0 0 13 12"><rect x=".5" y=".5" width="12" height="11" fill="#b8bcc0" stroke="#7a7e83"/><rect x="3.500" y="2.500" width="6" height="7" fill="#f6f6f6" stroke="#7a7e83"/></svg></button>
          <button aria-label="Page break"><svg width="13" height="12" viewBox="0 0 13 12"><rect x=".5" y=".5" width="12" height="11" fill="#d9dcdf" stroke="#7a7e83"/><path d="M4.500 1v6M8.500 1v6M1 7.500h11" stroke="#666"/></svg></button>
        </div>
        <span>100%</span>
        <div class="zoom">
          <button aria-label="Zoom out"><svg width="15" height="15" viewBox="0 0 15 15"><circle cx="7.500" cy="7.500" r="6.500" fill="#f2f3f4" stroke="#7b8086"/><path d="M4 7.500h7" stroke="#444" stroke-width="1.500"/></svg></button>
          <input type="range" aria-label="Zoom" value="50" />
          <button aria-label="Zoom in"><svg width="15" height="15" viewBox="0 0 15 15"><circle cx="7.500" cy="7.500" r="6.500" fill="#f2f3f4" stroke="#7b8086"/><path d="M4 7.500h7M7.500 4v7" stroke="#444" stroke-width="1.500"/></svg></button>
        </div>
      </footer>
      <div class="task"><div class="inner">
        <button class="start" aria-label="Start"><svg width="17" height="16" viewBox="0 0 17 16"><path d="M0 2.500l7-1v6H0zM8 1.300L17 0v7.500H8zM0 8.500h7v6l-7-1zM8 8.500h9V16l-9-1.300z" fill="#f3f3f3"/></svg></button>
        <label class="search"><svg width="16" height="16" viewBox="0 0 16 16" fill="none" stroke="#333" stroke-width="1.300"><circle cx="10" cy="6" r="4.800"/><path d="M6.500 9.500L1 15"/></svg><input aria-label="Search" placeholder="Type here to search" /></label>
        <button class="app view" aria-label="Task view"><svg width="17" height="16" viewBox="0 0 17 16" fill="none" stroke="#ddd" stroke-width="1.300"><path d="M1 1v3h10V1M1 15v-3h10v3M2.500 5.500h7v5h-7zM14.500 1v14"/><path d="M13 5h3v3h-3z" fill="#ddd" stroke="none"/></svg></button>
        <button class="app" aria-label="Files"><svg width="21" height="18" viewBox="0 0 21 18"><path d="M0 1h7l2 2h12v15H0z" fill="#e9bd4b"/><path d="M0 5h21v13H0z" fill="#fadb74"/><path d="M5 18v-5c0-2 2-2 2-2h8s2 0 2 2v5h-3v-3H8v3z" fill="#3e98cf"/></svg></button>
        <button class="app" aria-label="Recorder"><svg width="23" height="24" viewBox="0 0 23 24"><circle cx="11" cy="12" r="10" fill="#2a2a2d" stroke="#c9c9c9" stroke-width="1.400"/><path d="M11 12c-1-4-4-5-6-3M11 12c4-1 6-3 4-6M11 12c-2 3-1 6 2 7" fill="none" stroke="#c9c9c9" stroke-width="2"/><circle cx="17" cy="19" r="5.500" fill="#f40b0b"/></svg></button>
        <button class="app live" aria-label="Spreadsheet"><svg width="21" height="20" viewBox="0 0 21 20"><rect x="3" width="17" height="18" fill="#bfe2b7"/><path d="M11 4h8M11 8h8M11 12h8M15 1v16" stroke="#fff"/><path d="M0 3l12-2v17L0 16z" fill="#d9f0d3"/><path d="M2 4h3l2 3 2-3h3L8.500 9.500 12 15H9L7 12l-2 3H2l3.500-5.500z" fill="#2f8c3a"/></svg></button>
        <div class="right">
          <div class="weather"><svg width="23" height="23" viewBox="0 0 23 23"><path d="M15 2a10 10 0 1 1-12 14c7 2 13-4 12-14z" fill="#f4ae3a"/><path d="M4 11a4 4 0 0 1 1-7 5 5 0 0 1 8 1 3 3 0 0 1 1 6z" fill="#c9dcf4"/></svg><span class="wx"><span>30°C</span><span>Mostly clear</span></span></div>
          <button class="tray" aria-label="Hidden icons"><svg width="12" height="8" viewBox="0 0 12 8"><path d="M1 7l5-5 5 5" fill="none" stroke="#eee" stroke-width="1.300"/></svg></button>
          <button class="tray" aria-label="Camera"><svg width="13" height="16" viewBox="0 0 13 16" fill="none" stroke="#eee" stroke-width="1.200"><rect x="1" y="4" width="8" height="8" rx="1"/><circle cx="5" cy="8" r="1.800"/><path d="M9 7l3-2v6L9 9M2 1.500c2-1 5-1 7 0M2 14.500c2 1 5 1 7 0"/></svg></button>
          <button class="tray" aria-label="Microphone"><svg width="11" height="16" viewBox="0 0 11 16"><rect x="3" width="5" height="10" rx="2.500" fill="#fff"/><path d="M1 7v2c0 4 9 4 9 0V7M5.500 12v3M3 15.500h5" fill="none" stroke="#fff" stroke-width="1.300"/></svg></button>
          <button class="tray" aria-label="Battery"><svg width="16" height="12" viewBox="0 0 16 12" fill="none" stroke="#eee" stroke-width="1.200"><path d="M6 3.500h8v6H4V7M15.500 5v3"/><path d="M1 1v2c0 3 4 3 4 0V1M3 5v4"/></svg></button>
          <button class="tray" aria-label="Network"><svg width="16" height="16" viewBox="0 0 16 16" fill="none" stroke="#eee" stroke-width="1.200"><circle cx="8" cy="8" r="7"/><path d="M1 8h14M8 1c-5 4-5 10 0 14M8 1c5 4 5 10 0 14"/><circle cx="12" cy="12" r="3.500" fill="#30352a"/><path d="M10 14l4-4"/></svg></button>
          <button class="tray" aria-label="Volume"><svg width="16" height="14" viewBox="0 0 16 14" fill="none" stroke="#eee" stroke-width="1.200"><path d="M1 5h2l4-4v12L3 9H1zM9 5c1 1 1 3 0 4M11 3c2 2 2 6 0 8M13 1c3 3 3 9 0 12"/></svg></button>
          <span class="lang">ENG</span>
          <div class="clock">14:49<br />15-07-2024</div>
          <button class="note" aria-label="Notifications"><svg width="24" height="24" viewBox="0 0 24 24"><path d="M1 4h15v12H8l-3 3v-3H1z" fill="#fff"/><path d="M4 7.500h9M4 10.500h9" stroke="#333"/><circle cx="16" cy="17" r="6.500" fill="#4b4f4b" stroke="#888"/><text x="13" y="21" class="six">6</text></svg></button>
        </div>
      </div></div>
      <div class="over cc">So, we have to select the column with date.</div>
    `;
  }
}
